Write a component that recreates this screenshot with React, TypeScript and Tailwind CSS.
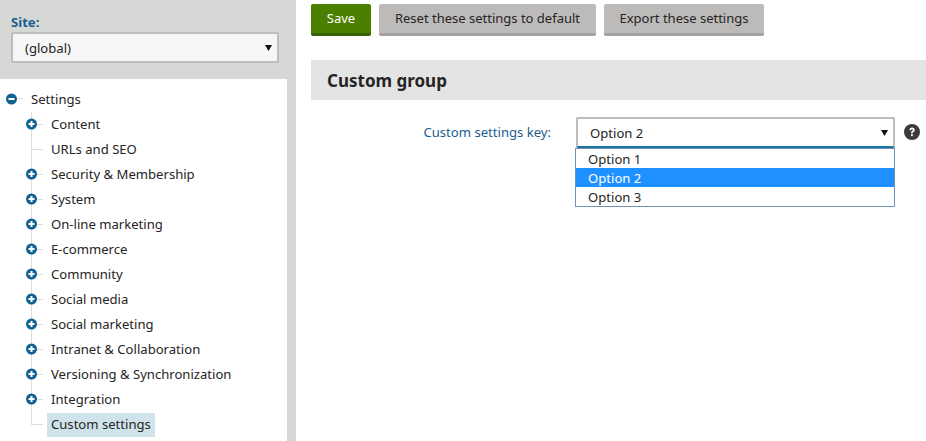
import { useState } from "react";

const items = [
  { label: "Content", expandable: true },
  { label: "URLs and SEO", expandable: false },
  { label: "Security & Membership", expandable: true },
  { label: "System", expandable: true },
  { label: "On-line marketing", expandable: true },
  { label: "E-commerce", expandable: true },
  { label: "Community", expandable: true },
  { label: "Social media", expandable: true },
  { label: "Social marketing", expandable: true },
  { label: "Intranet & Collaboration", expandable: true },
  { label: "Versioning & Synchronization", expandable: true },
  { label: "Integration", expandable: true },
];

const options = ["Option 1", "Option 2", "Option 3"];

function Toggle({ open }: { open?: boolean }) {
  return (
    <svg width="13" height="12" viewBox="0 0 13 12" className="block">
      <circle cx="6.5" cy="6" r="5.5" fill="#0f6194" />
      <rect x="3.5" y="5" width="6" height="2" fill="#fff" />
      {open ? null : <rect x="5.5" y="3" width="2" height="6" fill="#fff" />}
    </svg>
  );
}

function Caret() {
  return (
    <svg width="7" height="6" viewBox="0 0 7 6" className="block">
      <path d="M0 0h7L3.5 6z" fill="#111" />
    </svg>
  );
}

function TreeRow({ label, expandable }: { label: string; expandable: boolean }) {
  return (
    <li className="relative flex h-[25px] items-center pl-[51px]">
      <span className="absolute left-[31px] top-0 h-full w-px bg-[#dcdcdc]" />
      <span className="absolute left-[31px] top-[12px] h-px w-[12px] bg-[#dcdcdc]" />
      {expandable ? (
        <span className="absolute left-[25px] top-[6px]">
          <Toggle />
        </span>
      ) : null}
      {label}
    </li>
  );
}

export default function App() {
  const [site] = useState("(global)");
  const [selected] = useState("Option 2");

  return (
    <div className="flex h-[441px] w-[926px] overflow-hidden bg-white font-['Noto_Sans','Open_Sans',sans-serif] text-[13.1px] text-[#262524]">
      <aside className="flex w-[296px] shrink-0 flex-col bg-[#d6d8d5]">
        <div className="h-[79px] pl-[11px] pr-[17px] pt-[13px]">
          <label className="block h-[19px] text-[13.1px] leading-[19px] font-bold text-[#1a5d8f]">Site:</label>
          <div className="flex h-[31px] items-center justify-between rounded-[2px] border-2 border-[#bdbdbd] bg-[#f6f6f6] pl-[12px] pr-[5px]">
            <span className="pt-[2px]">{site}</span>
            <Caret />
          </div>
        </div>
        <div className="w-[287px] flex-1 bg-white">
          <div className="relative flex h-[40px] items-center pl-[31px] pt-[2px]">
            <span className="absolute left-[5px] top-[14px]">
              <Toggle open />
            </span>
            <span className="absolute left-[17px] top-[19px] h-px w-[6px] bg-[#dcdcdc]" />
            Settings
          </div>
          <ul className="-mt-[7px]">
            {items.map((item) => (
              <TreeRow key={item.label} label={item.label} expandable={item.expandable} />
            ))}
            <li className="relative flex h-[25px] items-center pl-[47px]">
              <span className="absolute left-[31px] top-0 h-[12px] w-px bg-[#dcdcdc]" />
              <span className="absolute left-[31px] top-[12px] h-px w-[12px] bg-[#dcdcdc]" />
              <span className="flex h-[24px] items-center bg-[#cfe4ea] px-[4px]">Custom settings</span>
            </li>
          </ul>
        </div>
      </aside>

      <main className="flex-1 pl-[15px] pt-[4px]">
        <div className="flex gap-[8px] text-[13px]">
          <button className="h-[32px] w-[60px] rounded-[2px] border-b-[3px] border-[#376100] bg-[#4a7f00] text-white">Save</button>
          <button className="h-[32px] w-[217px] rounded-[2px] border-b-[3px] border-[#a3a1a1] bg-[#bdbaba]">Reset these settings to default</button>
          <button className="h-[32px] w-[160px] rounded-[2px] border-b-[3px] border-[#a3a1a1] bg-[#bdbaba]">Export these settings</button>
        </div>
        <h2 className="mt-[24px] flex h-[40px] items-center bg-[#e4e4e4] pl-[16px] pt-[2px] text-[17px] font-bold">Custom group</h2>
        <div className="mt-[17px] flex items-start">
          <label className="flex h-[31px] w-[240px] items-center justify-end text-[#1a5d8f]">Custom settings key:</label>
          <div className="relative ml-[25px] w-[319px]">
            <div className="flex h-[31px] items-center justify-between rounded-[2px] border-2 border-[#bdbdbd] border-b-[#1b75a5] pl-[12px] pr-[5px]">
              <span className="pt-[2px]">{selected}</span>
              <Caret />
            </div>
            <ul className="absolute left-[-1px] top-[31px] z-10 w-[320px] border border-[#6f94b3] bg-white">
              {options.map((option) => (
                <li
                  key={option}
                  className={
                    option === selected
                      ? "flex h-[19px] items-center bg-[#1e90ff] pl-[12px] pt-[3px] text-white"
                      : "flex h-[19px] items-center pl-[12px] pt-[3px]"
                  }
                >
                  {option}
                </li>
              ))}
            </ul>
          </div>
          <svg width="16" height="16" viewBox="0 0 16 16" className="ml-[9px] mt-[7px]">
            <circle cx="8" cy="8" r="8" fill="#3b3b3b" />
            <path d="M5.4 6.2C5.4 4.7 6.5 3.6 8.1 3.6c1.5 0 2.6 1 2.6 2.3 0 1.1-.6 1.6-1.3 2.1-.5.4-.7.6-.7 1.2H7c0-1.1.4-1.6 1.1-2.1.5-.4.8-.6.8-1.1 0-.5-.4-.8-.9-.8-.6 0-.9.4-1 1z" fill="#fff" />
            <rect x="7" y="10.2" width="1.8" height="1.9" fill="#fff" />
          </svg>
        </div>
      </main>
    </div>
  );
}
